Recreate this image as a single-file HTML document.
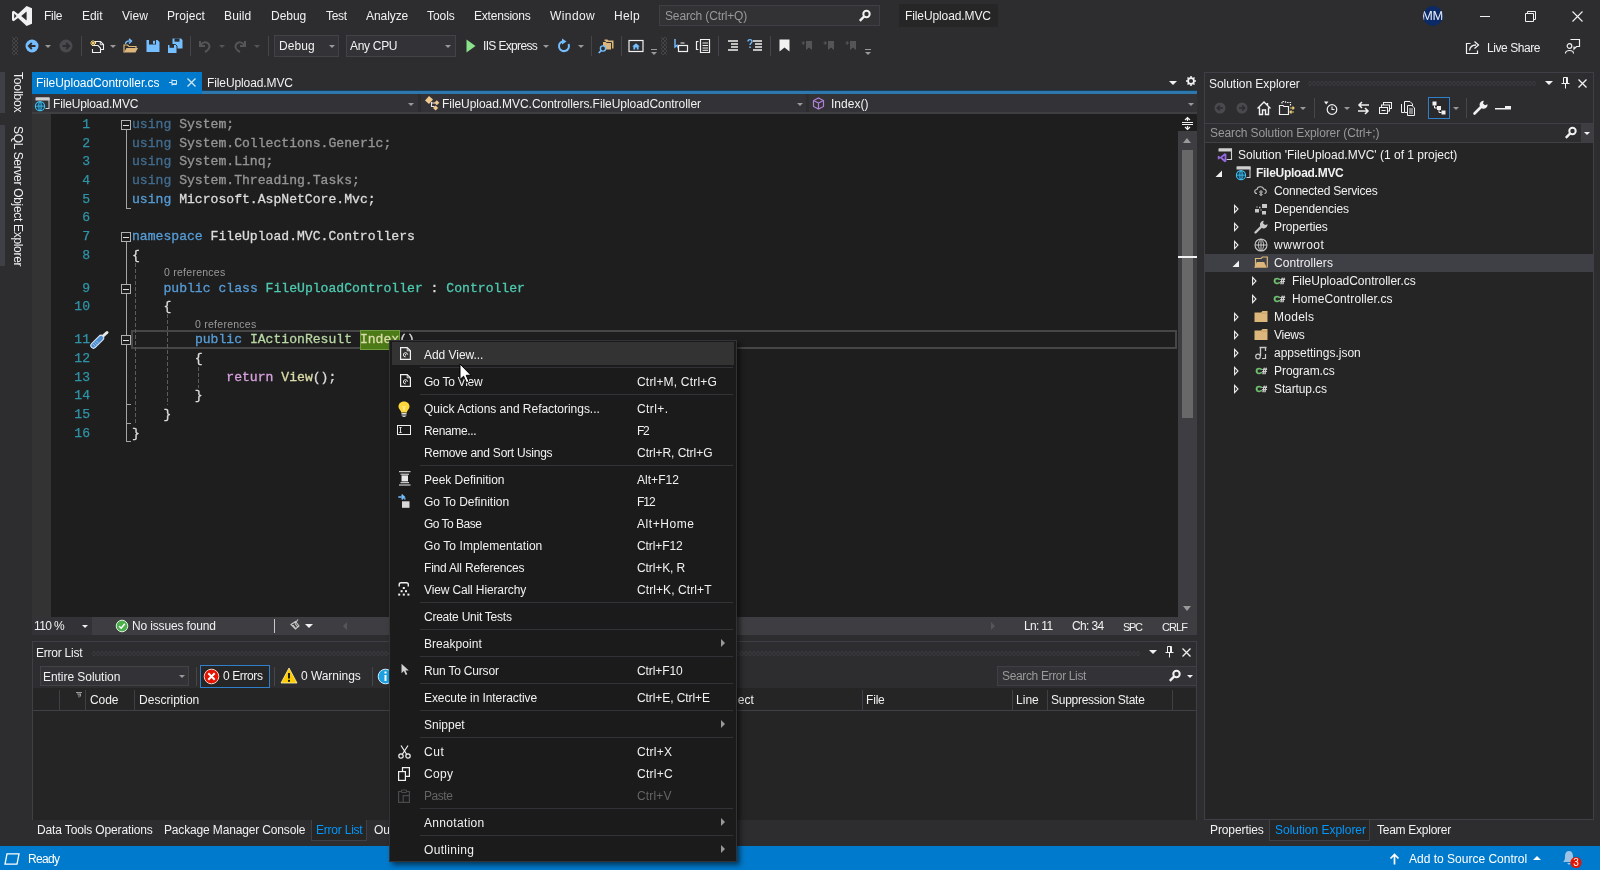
<!DOCTYPE html>
<html lang="en">
<head>
<meta charset="utf-8">
<title>FileUpload.MVC - Microsoft Visual Studio</title>
<style>
*{box-sizing:border-box;margin:0;padding:0}
html,body{width:1600px;height:870px;overflow:hidden;background:#2d2d30}
body{position:relative;font-family:"Liberation Sans",sans-serif;font-size:12px;color:#f1f1f1;line-height:16px;-webkit-font-smoothing:antialiased}
.a{position:absolute}
.t{position:absolute;white-space:nowrap;line-height:16px;height:16px}
.b{position:absolute}
svg{position:absolute;overflow:visible}
.code{-webkit-text-stroke:0.3px;margin:1px 0 0 1px;font-family:"Liberation Mono",monospace;font-size:13.1px;color:#dcdcdc;white-space:pre;position:absolute;line-height:19px;height:19px}
.kw{color:#569cd6}.ty{color:#4ec9b0}.fn{color:#dcdcaa}.cf{color:#d8a0df}
.ln{-webkit-text-stroke:0.25px;margin-top:1px;font-family:"Liberation Mono",monospace;font-size:13.1px;color:#2f94a8;position:absolute;text-align:right;width:40px;line-height:19px;height:19px}
.cl{font-size:10.5px;color:#999;position:absolute;white-space:nowrap;line-height:13px}
.dim{color:#999}
.mi{position:absolute;left:35px;white-space:nowrap;line-height:16px;color:#f1f1f1}
.mk{position:absolute;left:248px;white-space:nowrap;line-height:16px;color:#f1f1f1}
.ms{position:absolute;left:32px;width:312px;height:1px;background:#333337}
.sub{position:absolute;left:333px;width:0;height:0;border-left:4px solid #999;border-top:4px solid transparent;border-bottom:4px solid transparent}
.tri{position:absolute;width:0;height:0;border-left:3px solid transparent;border-right:3px solid transparent;border-top:3px solid #999}
.sep{position:absolute;width:1px;background:#46464a}
.dots{position:absolute;height:5px;background-image:radial-gradient(circle,#48484c 0.55px,transparent 0.85px),radial-gradient(circle,#48484c 0.55px,transparent 0.85px);background-size:4px 4px,4px 4px;background-position:0 -1.5px,2px 0.5px}
.ity{color:#b8d7a3}.hl{background:#4b7a17;display:inline-block;height:20px;line-height:19px;vertical-align:top;box-shadow:inset 0 0 0 1px #6f9c3c;padding:0 0.4px;margin:0 -0.4px}
.grip{background-image:radial-gradient(circle,#5e5e62 0.55px,transparent 0.85px),radial-gradient(circle,#5e5e62 0.55px,transparent 0.85px);background-size:4px 4px,4px 4px;background-position:0 0,2px 2px}
</style>
</head>
<body>
<div id="root" style="position:absolute;left:0;top:0;width:1600px;height:870px;will-change:transform">
<!-- ===== Title / menu bar ===== -->
<div class="a" id="titlebar" style="left:0;top:0;width:1600px;height:31px;background:#2d2d30"></div>
<svg style="left:11px;top:5px" width="22" height="22" viewBox="0 0 22 22"><path d="M15.6 1 L21 3.2 V18.8 L15.6 21 L7 12.9 L2.7 16.2 L1 15.3 V6.7 L2.7 5.8 L7 9.1 Z M15.6 6.6 L10.2 11 L15.6 15.4 Z M3.2 8.6 V13.4 L5.6 11 Z" fill="#f1f1f1" fill-rule="evenodd"/></svg>
<div class="t" style="letter-spacing:-0.281px;left:44px;top:8px">File</div>
<div class="t" style="letter-spacing:-0.062px;left:82px;top:8px">Edit</div>
<div class="t" style="letter-spacing:0.068px;left:122px;top:8px">View</div>
<div class="t" style="letter-spacing:0.073px;left:167px;top:8px">Project</div>
<div class="t" style="letter-spacing:0.153px;left:224px;top:8px">Build</div>
<div class="t" style="letter-spacing:-0.019px;left:271px;top:8px">Debug</div>
<div class="t" style="letter-spacing:-0.339px;left:326px;top:8px">Test</div>
<div class="t" style="letter-spacing:-0.067px;left:366px;top:8px">Analyze</div>
<div class="t" style="letter-spacing:-0.054px;left:427px;top:8px">Tools</div>
<div class="t" style="letter-spacing:-0.211px;left:474px;top:8px">Extensions</div>
<div class="t" style="letter-spacing:0.422px;left:550px;top:8px">Window</div>
<div class="t" style="letter-spacing:0.304px;left:614px;top:8px">Help</div>
<div class="a" style="left:659px;top:5px;width:221px;height:21px;background:#323235;border:1px solid #3f3f46"></div>
<div class="t" style="letter-spacing:-0.147px;left:665px;top:8px;color:#999">Search (Ctrl+Q)</div>
<svg style="left:858px;top:9px" width="14" height="14" viewBox="0 0 14 14"><circle cx="8.5" cy="5" r="3.2" fill="none" stroke="#f1f1f1" stroke-width="2"/><path d="M6.2 7.4 L1.8 11.8" stroke="#f1f1f1" stroke-width="2.4"/></svg>
<div class="a" style="left:899px;top:4px;width:99px;height:23px;background:#262627"></div>
<div class="t" style="letter-spacing:-0.106px;left:905px;top:8px">FileUpload.MVC</div>
<div class="a" style="left:1423px;top:6px;width:20px;height:20px;border-radius:10px;background:#0b2a66;overflow:hidden"><div class="t" style="left:-1px;top:2px;font-size:13px;color:#e8eefc;letter-spacing:-0.3px">MM</div></div>
<div class="a" style="left:1480px;top:16px;width:10px;height:1px;background:#f1f1f1"></div>
<svg style="left:1525px;top:11px" width="11" height="11" viewBox="0 0 11 11"><path d="M0.5 2.5 H8.5 V10.5 H0.5 Z M2.5 2.5 V0.5 H10.5 V8.5 H8.5" fill="none" stroke="#f1f1f1" stroke-width="1"/></svg>
<svg style="left:1572px;top:11px" width="11" height="11" viewBox="0 0 11 11"><path d="M0.5 0.5 L10.5 10.5 M10.5 0.5 L0.5 10.5" fill="none" stroke="#f1f1f1" stroke-width="1.1"/></svg>

<!-- ===== Toolbar ===== -->
<div class="a grip" style="left:12px;top:37px;width:6px;height:18px"></div>
<!-- back -->
<svg style="left:24px;top:38px" width="16" height="16" viewBox="0 0 16 16"><circle cx="8" cy="8" r="6.5" fill="#75beff"/><path d="M11.5 8 H5.2 M7.8 5 L4.8 8 L7.8 11" stroke="#2d2d30" stroke-width="1.8" fill="none"/></svg>
<div class="tri" style="left:45px;top:45px"></div>
<svg style="left:58px;top:38px" width="16" height="16" viewBox="0 0 16 16"><circle cx="8" cy="8" r="6.5" fill="#4a4a4e"/><path d="M4.5 8 H10.8 M8.2 5 L11.2 8 L8.2 11" stroke="#2d2d30" stroke-width="1.8" fill="none"/></svg>
<div class="sep" style="left:81px;top:36px;height:20px"></div>
<!-- new item -->
<svg style="left:88px;top:38px" width="16" height="16" viewBox="0 0 16 16"><path d="M7.5 6 V3.5 H12.5 L15.5 6.5 V11.5 H13" fill="none" stroke="#f1f1f1" stroke-width="1.1"/><path d="M12.3 3.5 V6.7 H15.5" fill="none" stroke="#f1f1f1" stroke-width="0.9"/><path d="M4.5 8 V7.5 H10 L12.5 10 V14.5 H4.5 V11" fill="none" stroke="#f1f1f1" stroke-width="1.1"/><path d="M5 2 V8 M2 5 H8 M3 3 L7 7 M7 3 L3 7" stroke="#f0d070" stroke-width="1"/></svg>
<div class="tri" style="left:110px;top:45px"></div>
<!-- open -->
<svg style="left:122px;top:38px" width="17" height="16" viewBox="0 0 17 16"><path d="M2 14.5 V7 H5.5 L7 8.5 H14 V10" fill="none" stroke="#dcb67a" stroke-width="1.2"/><path d="M2 14.5 L4.5 10 H16 L13.5 14.5 Z" fill="#dcb67a"/><path d="M3.5 6 C3.5 3.5 6 2.5 9 3 M7 0.8 L9.5 3 L7 5.4" fill="none" stroke="#75beff" stroke-width="1.4"/></svg>
<!-- save -->
<svg style="left:145px;top:38px" width="16" height="16" viewBox="0 0 16 16"><path d="M1.5 2 H12.5 L14.5 4 V14 H1.5 Z" fill="#75beff"/><rect x="4" y="2" width="7" height="4.5" fill="#2d2d30"/><rect x="8" y="2.8" width="2" height="3" fill="#75beff"/><rect x="4" y="9.5" width="8" height="4.5" fill="#75beff"/></svg>
<!-- save all -->
<svg style="left:166px;top:37px" width="18" height="18" viewBox="0 0 18 18"><path d="M6.5 1.5 H15 L16.5 3 V11.5 H6.5 Z" fill="#75beff"/><rect x="8.5" y="1.5" width="5" height="3.2" fill="#2d2d30"/><path d="M1.5 7.5 H9.5 L11 9 V16.5 H1.5 Z" fill="#75beff" stroke="#2d2d30" stroke-width="1"/><rect x="3.5" y="7.8" width="4.5" height="3" fill="#2d2d30"/></svg>
<div class="sep" style="left:190px;top:36px;height:20px"></div>
<!-- undo (disabled) -->
<svg style="left:197px;top:38px" width="16" height="16" viewBox="0 0 16 16"><path d="M3 3 V8 H8 M3.5 7.5 C5 4 10 3 12 6.5 C13.5 9.5 11 12.5 8 14" fill="none" stroke="#555558" stroke-width="2"/></svg>
<div class="tri" style="left:219px;top:45px;border-top-color:#555558"></div>
<svg style="left:232px;top:38px" width="16" height="16" viewBox="0 0 16 16"><path d="M13 3 V8 H8 M12.5 7.5 C11 4 6 3 4 6.5 C2.5 9.5 5 12.5 8 14" fill="none" stroke="#555558" stroke-width="2"/></svg>
<div class="tri" style="left:254px;top:45px;border-top-color:#555558"></div>
<div class="sep" style="left:268px;top:36px;height:20px"></div>
<!-- combos -->
<div class="a" style="left:274px;top:35px;width:65px;height:22px;background:#333337;border:1px solid #434346"></div>
<div class="t" style="letter-spacing:0.106px;left:279px;top:38px">Debug</div>
<div class="tri" style="left:329px;top:45px"></div>
<div class="a" style="left:346px;top:35px;width:110px;height:22px;background:#333337;border:1px solid #434346"></div>
<div class="t" style="letter-spacing:-0.31px;left:350px;top:38px">Any CPU</div>
<div class="tri" style="left:445px;top:45px"></div>
<!-- play -->
<svg style="left:466px;top:39px" width="10" height="14" viewBox="0 0 10 14"><path d="M0.5 0.5 L9.5 7 L0.5 13.5 Z" fill="#8ae28a"/></svg>
<div class="t" style="letter-spacing:-0.656px;left:483px;top:38px">IIS Express</div>
<div class="tri" style="left:543px;top:45px"></div>
<!-- refresh -->
<svg style="left:556px;top:38px" width="16" height="16" viewBox="0 0 16 16"><path d="M12.5 6 A5 5 0 1 1 7 3.2" fill="none" stroke="#75beff" stroke-width="2"/><path d="M6 0.5 L10.5 3.5 L6 6.5 Z" fill="#75beff"/></svg>
<div class="tri" style="left:578px;top:45px"></div>
<div class="sep" style="left:591px;top:36px;height:20px"></div>
<!-- find in files -->
<svg style="left:598px;top:38px" width="17" height="16" viewBox="0 0 17 16"><path d="M6.5 1.5 H9.5 L10.5 2.5 H15.5 V10.5 H6.5 Z" fill="#dcb67a"/><path d="M4.5 3.5 H7.5 L8.5 4.5 H13.5 V12 H4.5 Z" fill="#dcb67a" stroke="#2d2d30" stroke-width="1"/><circle cx="5" cy="10.5" r="2.6" fill="#2d2d30" stroke="#75beff" stroke-width="1.4"/><path d="M3.2 12.5 L0.8 15" stroke="#75beff" stroke-width="1.8"/></svg>
<div class="sep" style="left:621px;top:36px;height:20px"></div>
<!-- browser home -->
<svg style="left:628px;top:38px" width="16" height="16" viewBox="0 0 16 16"><rect x="1" y="2.5" width="14" height="11" fill="none" stroke="#f1f1f1" stroke-width="1.2"/><path d="M8 5.2 L4.2 8.5 H5.4 V11.5 H7.2 V9.5 H8.8 V11.5 H10.6 V8.5 H11.8 Z" fill="#75beff"/></svg>
<div class="a" style="left:651px;top:49px;width:6px;height:1px;background:#999"></div>
<div class="tri" style="left:651px;top:52px"></div>
<div class="a grip" style="left:661px;top:37px;width:6px;height:18px"></div>
<!-- misc editing icons -->
<svg style="left:673px;top:38px" width="16" height="16" viewBox="0 0 16 16"><path d="M2 1 V9 L4 7.3 L5.5 10.5" fill="none" stroke="#75beff" stroke-width="1.4"/><rect x="5.5" y="7.5" width="9" height="6" fill="none" stroke="#f1f1f1" stroke-width="1.2"/><path d="M7.5 5 H11.5" stroke="#f1f1f1"/></svg>
<svg style="left:695px;top:38px" width="16" height="16" viewBox="0 0 16 16"><path d="M3.5 3.5 H1.5 V11.5 H3.5" fill="none" stroke="#f1f1f1" stroke-width="1.2"/><path d="M5.5 1.5 H14.5 V14.5 H5.5 Z" fill="none" stroke="#f1f1f1" stroke-width="1.2"/><path d="M7.5 5 H13 M7.5 7.5 H13 M7.5 10 H13 M7.5 12.3 H13" stroke="#f1f1f1" stroke-width="1"/></svg>
<div class="sep" style="left:718px;top:36px;height:20px"></div>
<svg style="left:726px;top:39px" width="14" height="14" viewBox="0 0 14 14"><path d="M2 2 H12 M5 5 H12 M5 8 H12 M2 11 H12" stroke="#f1f1f1" stroke-width="1.3"/></svg>
<svg style="left:747px;top:38px" width="16" height="16" viewBox="0 0 16 16"><path d="M6 3 H15 M8 6 H15 M8 9 H15 M6 12 H15" stroke="#f1f1f1" stroke-width="1.3"/><path d="M1 3.5 C1 1 5 1 5 3.5 C5 5 3 5 3 7" fill="none" stroke="#75beff" stroke-width="1.4"/><rect x="2.3" y="8.5" width="1.5" height="1.5" fill="#75beff"/></svg>
<div class="sep" style="left:770px;top:36px;height:20px"></div>
<svg style="left:779px;top:39px" width="11" height="13" viewBox="0 0 11 13"><path d="M0.5 0.5 H10.5 V12.5 L5.5 8.5 L0.5 12.5 Z" fill="#f1f1f1"/></svg>
<svg style="left:801px;top:40px" width="12" height="12" viewBox="0 0 12 12"><path d="M5 1 H11 V10 L8 7.5 L5 10 Z" fill="#555558"/><path d="M0.5 3 H4 M2.2 1.3 V4.7" stroke="#555558" stroke-width="1.2"/></svg>
<svg style="left:823px;top:40px" width="12" height="12" viewBox="0 0 12 12"><path d="M5 1 H11 V10 L8 7.5 L5 10 Z" fill="#555558"/><path d="M0.5 3 H4 M2.2 1.3 V4.7" stroke="#555558" stroke-width="1.2"/></svg>
<svg style="left:845px;top:40px" width="12" height="12" viewBox="0 0 12 12"><path d="M5 1 H11 V10 L8 7.5 L5 10 Z" fill="#555558"/><path d="M0.5 3 H4 M2.2 1.3 V4.7" stroke="#555558" stroke-width="1.2"/></svg>
<div class="a" style="left:865px;top:49px;width:6px;height:1px;background:#999"></div>
<div class="tri" style="left:865px;top:52px"></div>
<!-- live share -->
<svg style="left:1465px;top:40px" width="16" height="15" viewBox="0 0 16 15"><path d="M5.5 3.5 H1.5 V13.5 H12.5 V10.5" fill="none" stroke="#f1f1f1" stroke-width="1.2"/><path d="M4.5 10.5 C5 7 7.5 5 11 5 M9.5 1.5 L13.5 5 L9.5 8.5" fill="none" stroke="#f1f1f1" stroke-width="1.3"/></svg>
<div class="t" style="letter-spacing:-0.431px;left:1487px;top:40px">Live Share</div>
<svg style="left:1564px;top:38px" width="17" height="17" viewBox="0 0 17 17"><path d="M6.5 1.5 H15.5 V8.5 H12.5 L10 11 V8.5" fill="none" stroke="#f1f1f1" stroke-width="1.2"/><circle cx="5.5" cy="8" r="2.3" fill="none" stroke="#f1f1f1" stroke-width="1.2"/><path d="M1.5 15.5 C1.5 11.5 9.5 11.5 9.5 15.5" fill="none" stroke="#f1f1f1" stroke-width="1.2"/></svg>

<!-- ===== Left auto-hide strip ===== -->
<div class="a" style="left:0;top:72px;width:5px;height:41px;background:#3f3f46"></div>
<div class="a" style="left:0;top:125px;width:5px;height:141px;background:#3f3f46"></div>
<div class="t" style="left:10px;top:72px;letter-spacing:-0.15px;transform-origin:0 0;transform:rotate(90deg) translate(0,-100%);">Toolbox</div>
<div class="t" style="left:10px;top:126px;letter-spacing:-0.31px;transform-origin:0 0;transform:rotate(90deg) translate(0,-100%);">SQL Server Object Explorer</div>
<!-- ===== Document well ===== -->
<div class="a" style="left:32px;top:72px;width:170px;height:19px;background:#007acc"></div>
<div class="t" id="tab1" style="letter-spacing:-0.026px;left:36px;top:75px;color:#fff">FileUploadController.cs</div>
<svg style="left:169px;top:78px" width="9" height="9" viewBox="0 0 9 9"><path d="M0 4.5 H3 M3 1.5 V7.5 M3 2.5 H7.5 V6.5 H3 M3 5.8 H7.5" fill="none" stroke="#d0e6f5" stroke-width="1"/></svg>
<svg style="left:187px;top:78px" width="9" height="9" viewBox="0 0 9 9"><path d="M0.5 0.5 L8.5 8.5 M8.5 0.5 L0.5 8.5" fill="none" stroke="#d0e6f5" stroke-width="1.3"/></svg>
<div class="t" id="tab2" style="letter-spacing:-0.106px;left:207px;top:75px">FileUpload.MVC</div>
<div class="a" style="left:202px;top:90px;width:995px;height:1px;background:#173f5a"></div><div class="a" style="left:202px;top:91px;width:995px;height:3px;background:#2f78ad"></div><div class="a" style="left:32px;top:90px;width:170px;height:4px;background:#007acc"></div>
<div class="tri" style="left:1169px;top:81px;border-left-width:4px;border-right-width:4px;border-top:4px solid #f1f1f1"></div>
<svg style="left:1186px;top:76px" width="10" height="10" viewBox="0 0 10 10"><path d="M5 0 V10 M0 5 H10 M1.5 1.5 L8.5 8.5 M8.5 1.5 L1.5 8.5" stroke="#f1f1f1" stroke-width="1.5"/><circle cx="5" cy="5" r="2.9" fill="#2d2d30" stroke="#f1f1f1" stroke-width="1.7"/></svg>
<div class="a" style="left:32px;top:94px;width:1165px;height:20px;background:#333337"></div><div class="a" style="left:32px;top:112px;width:1165px;height:2px;background:#3f3f42"></div>
<div class="a" style="left:418px;top:94px;width:3px;height:18px;background:#2d2d30"></div>
<div class="a" style="left:806px;top:94px;width:3px;height:18px;background:#2d2d30"></div>
<svg style="left:35px;top:96px" width="16" height="16" viewBox="0 0 16 16"><path d="M1 2 H14 V12.5 H10.5" fill="none" stroke="#d0d0d0" stroke-width="1.1"/><path d="M0.5 1.5 H14.5 V4.5 H0.5 Z" fill="#d0d0d0"/><circle cx="5" cy="10.2" r="4.6" fill="#10384f" stroke="#45c2f2" stroke-width="1.1"/><path d="M0.6 10.2 H9.4 M5 5.6 V14.8 M5 5.6 C2.6 7.6 2.6 12.8 5 14.8 M5 5.6 C7.4 7.6 7.4 12.8 5 14.8" fill="none" stroke="#45c2f2" stroke-width="0.8"/></svg>
<div class="t" style="letter-spacing:-0.144px;left:53px;top:96px">FileUpload.MVC</div>
<div class="tri" style="left:408px;top:103px"></div>
<svg style="left:424px;top:95px" width="16" height="17" viewBox="0 0 16 17"><path d="M1 5.5 L5 1 L9 4.5 L5 9 Z" fill="#efc88c"/><path d="M7.5 7 V11.5 H10.5 M7.5 8 H11" fill="none" stroke="#e8e8e8" stroke-width="1.1"/><path d="M10.3 7.8 L12.8 5.3 L15.3 7.8 L12.8 10.3 Z" fill="#efc88c"/><path d="M9 13 L11.6 10.4 L14.2 13 L11.6 15.6 Z" fill="#efc88c"/></svg>
<div class="t" style="letter-spacing:-0.053px;left:442px;top:96px">FileUpload.MVC.Controllers.FileUploadController</div>
<div class="tri" style="left:797px;top:103px"></div>
<svg style="left:812px;top:97px" width="13" height="13" viewBox="0 0 13 13"><path d="M6.5 1 L11.5 3.5 V9.5 L6.5 12 L1.5 9.5 V3.5 Z M1.5 3.5 L6.5 6 L11.5 3.5 M6.5 6 V12" fill="none" stroke="#b180d7" stroke-width="1.2"/></svg>
<div class="t" style="letter-spacing:0.023px;left:831px;top:96px">Index()</div>
<div class="tri" style="left:1188px;top:103px"></div>
<div class="a" style="left:32px;top:114px;width:1165px;height:503px;background:#1e1e1e"></div>
<div class="a" style="left:32px;top:114px;width:19px;height:503px;background:#333333"></div>
<div class="a" style="left:131px;top:330px;width:1046px;height:19px;border:2px solid #464646"></div>
<div class="a" style="left:126px;top:128px;width:1px;height:80px;background:#a5a5a5"></div>
<div class="a" style="left:126px;top:208px;width:5px;height:1px;background:#a5a5a5"></div>
<div class="a" style="left:126px;top:241px;width:1px;height:201px;background:#a5a5a5"></div>
<div class="a" style="left:126px;top:404px;width:5px;height:1px;background:#a5a5a5"></div>
<div class="a" style="left:126px;top:423px;width:5px;height:1px;background:#a5a5a5"></div>
<div class="a" style="left:126px;top:441px;width:5px;height:1px;background:#a5a5a5"></div>
<div class="a" style="left:121px;top:120px;width:10px;height:10px;border:1px solid #b0b0b0;background:#1e1e1e"></div><div class="a" style="left:123px;top:125px;width:6px;height:1px;background:#e0e0e0"></div>
<div class="a" style="left:121px;top:232px;width:10px;height:10px;border:1px solid #b0b0b0;background:#1e1e1e"></div><div class="a" style="left:123px;top:237px;width:6px;height:1px;background:#e0e0e0"></div>
<div class="a" style="left:121px;top:284px;width:10px;height:10px;border:1px solid #b0b0b0;background:#1e1e1e"></div><div class="a" style="left:123px;top:289px;width:6px;height:1px;background:#e0e0e0"></div>
<div class="a" style="left:121px;top:335px;width:10px;height:10px;border:1px solid #b0b0b0;background:#1e1e1e"></div><div class="a" style="left:123px;top:340px;width:6px;height:1px;background:#e0e0e0"></div>
<div class="a" style="left:135px;top:263px;width:1px;height:162px;background-image:linear-gradient(#5c5c5c 66%,transparent 66%);background-size:1px 6px"></div>
<div class="a" style="left:167px;top:314px;width:1px;height:91px;background-image:linear-gradient(#5c5c5c 66%,transparent 66%);background-size:1px 6px"></div>
<div class="a" style="left:198px;top:367px;width:1px;height:21px;background-image:linear-gradient(#5c5c5c 66%,transparent 66%);background-size:1px 6px"></div>
<div class="ln" style="left:50px;top:114px">1</div>
<div class="code" style="opacity:0.62;left:131px;top:114px"><span class="kw">using</span> System;</div>
<div class="ln" style="left:50px;top:133px">2</div>
<div class="code" style="opacity:0.62;left:131px;top:133px"><span class="kw">using</span> System.Collections.Generic;</div>
<div class="ln" style="left:50px;top:151px">3</div>
<div class="code" style="opacity:0.62;left:131px;top:151px"><span class="kw">using</span> System.Linq;</div>
<div class="ln" style="left:50px;top:170px">4</div>
<div class="code" style="opacity:0.62;left:131px;top:170px"><span class="kw">using</span> System.Threading.Tasks;</div>
<div class="ln" style="left:50px;top:189px">5</div>
<div class="code" style="left:131px;top:189px"><span class="kw">using</span> Microsoft.AspNetCore.Mvc;</div>
<div class="ln" style="left:50px;top:207px">6</div>
<div class="ln" style="left:50px;top:226px">7</div>
<div class="code" style="left:131px;top:226px"><span class="kw">namespace</span> FileUpload.MVC.Controllers</div>
<div class="ln" style="left:50px;top:245px">8</div>
<div class="code" style="left:131px;top:245px">{</div>
<div class="ln" style="left:50px;top:278px">9</div>
<div class="code" style="left:131px;top:278px">    <span class="kw">public</span> <span class="kw">class</span> <span class="ty">FileUploadController</span> : <span class="ty">Controller</span></div>
<div class="ln" style="left:50px;top:296px">10</div>
<div class="code" style="left:131px;top:296px">    {</div>
<div class="ln" style="left:50px;top:329px">11</div>
<div class="code" style="left:131px;top:329px">        <span class="kw">public</span> <span class="ity">IActionResult</span> <span class="fn hl">Index</span>()</div>
<div class="ln" style="left:50px;top:348px">12</div>
<div class="code" style="left:131px;top:348px">        {</div>
<div class="ln" style="left:50px;top:367px">13</div>
<div class="code" style="left:131px;top:367px">            <span class="cf">return</span> <span class="fn">View</span>();</div>
<div class="ln" style="left:50px;top:385px">14</div>
<div class="code" style="left:131px;top:385px">        }</div>
<div class="ln" style="left:50px;top:404px">15</div>
<div class="code" style="left:131px;top:404px">    }</div>
<div class="ln" style="left:50px;top:423px">16</div>
<div class="code" style="left:131px;top:423px">}</div>
<div class="cl" style="letter-spacing:0.257px;left:164px;top:266px">0 references</div>
<div class="cl" style="letter-spacing:0.257px;left:195px;top:318px">0 references</div>
<svg style="left:90px;top:331px" width="19" height="18" viewBox="0 0 19 18"><path d="M12 6 L17 1.5" stroke="#e8e8e8" stroke-width="3" stroke-linecap="round"/><path d="M3.5 14.5 L11 7" stroke="#dfeaf6" stroke-width="6.4" stroke-linecap="round"/><path d="M3.5 14.5 L11 7" stroke="#4f8fd0" stroke-width="4.4" stroke-linecap="round"/><path d="M3 13 L6 16 M4.6 11.4 L7.6 14.4 M6.2 9.8 L9.2 12.8" stroke="#9cc4ee" stroke-width="0.9"/></svg>
<!-- ===== Editor scrollbar ===== -->
<div class="a" style="left:1178px;top:114px;width:19px;height:503px;background:#3e3e42"></div>
<div class="a" style="left:1178px;top:114px;width:19px;height:17px;background:#1e1e1e"></div>
<svg style="left:1182px;top:117px" width="11" height="13" viewBox="0 0 11 13"><path d="M0 5.5 H11 M0 7.5 H11 M5.5 0.5 V4 M5.5 9 V12.5 M3 3 L5.5 0.5 L8 3 M3 10 L5.5 12.5 L8 10" fill="none" stroke="#f1f1f1" stroke-width="1.2"/></svg>
<div class="a" style="left:1183px;top:138px;width:0;height:0;border-left:4.5px solid transparent;border-right:4.5px solid transparent;border-bottom:5px solid #999"></div>
<div class="a" style="left:1182px;top:150px;width:11px;height:268px;background:#686868"></div>
<div class="a" style="left:1178px;top:256px;width:19px;height:2px;background:#f1f1f1"></div>
<div class="a" style="left:1183px;top:606px;width:0;height:0;border-left:4.5px solid transparent;border-right:4.5px solid transparent;border-top:5px solid #999"></div>
<!-- ===== Editor bottom bar ===== -->
<div class="a" style="left:32px;top:617px;width:1165px;height:18px;background:#3e3e42"></div>
<div class="a" style="left:32px;top:617px;width:60px;height:18px;background:#333337"></div>
<div class="t" style="letter-spacing:-0.585px;left:34px;top:618px">110 %</div>
<div class="tri" style="left:82px;top:625px;border-top-color:#f1f1f1"></div>
<svg style="left:115px;top:619px" width="14" height="14" viewBox="0 0 14 14"><circle cx="7" cy="7" r="5.8" fill="#4cae4c" stroke="#d9f0d9" stroke-width="1"/><path d="M4.2 7.2 L6.2 9.2 L9.8 4.8" fill="none" stroke="#fff" stroke-width="1.5"/></svg>
<div class="t" style="letter-spacing:-0.147px;left:132px;top:618px">No issues found</div>
<div class="a" style="left:274px;top:619px;width:1px;height:14px;background:#c8c8c8"></div>
<svg style="left:289px;top:619px" width="13" height="13" viewBox="0 0 13 13"><path d="M9 0.5 L6 4.5 M2 5.5 L6.5 2.5 L10 7 L6.5 10 Z M4 6 L7 10 M6 4.5 L9 8.5" fill="none" stroke="#c8c8c8" stroke-width="1.1"/></svg>
<div class="tri" style="left:305px;top:624px;border-left-width:4px;border-right-width:4px;border-top:4px solid #f1f1f1"></div>
<div class="a" style="left:343px;top:622px;width:0;height:0;border-top:4px solid transparent;border-bottom:4px solid transparent;border-right:4px solid #55555a"></div>
<div class="a" style="left:991px;top:622px;width:0;height:0;border-top:4px solid transparent;border-bottom:4px solid transparent;border-left:4px solid #55555a"></div>
<div class="t" style="letter-spacing:-0.677px;left:1024px;top:618px">Ln: 11</div>
<div class="t" style="letter-spacing:-0.612px;left:1072px;top:618px">Ch: 34</div>
<div class="t" style="letter-spacing:-1.362px;left:1123px;top:619px;font-size:11px">SPC</div>
<div class="t" style="letter-spacing:-0.911px;left:1162px;top:619px;font-size:11px">CRLF</div>
<!-- ===== Error List ===== -->
<div class="a" style="left:32px;top:641px;width:1165px;height:179px;background:#2d2d30;border:1px solid #3f3f46"></div>
<div class="t" style="letter-spacing:-0.232px;left:36px;top:645px">Error List</div>
<div class="dots" style="left:92px;top:651px;width:1048px"></div>
<div class="tri" style="left:1149px;top:650px;border-left-width:4px;border-right-width:4px;border-top:4px solid #f1f1f1"></div>
<svg style="left:1164px;top:646px" width="10" height="12" viewBox="0 0 10 12"><path d="M3.5 0.5 H7.5 V6.5 H3.5 Z M6.5 0.5 V6.5 M1.5 6.5 H9.5 M5.5 6.5 V11.5" fill="none" stroke="#f1f1f1" stroke-width="1"/></svg>
<svg style="left:1182px;top:648px" width="9" height="9" viewBox="0 0 9 9"><path d="M0.5 0.5 L8.5 8.5 M8.5 0.5 L0.5 8.5" fill="none" stroke="#f1f1f1" stroke-width="1.3"/></svg>
<div class="a" style="left:40px;top:666px;width:149px;height:20px;background:#333337;border:1px solid #434346"></div>
<div class="t" style="letter-spacing:-0.053px;left:43px;top:669px">Entire Solution</div>
<div class="tri" style="left:179px;top:675px"></div>
<div class="sep" style="left:196px;top:667px;height:19px"></div>
<div class="a" style="left:200px;top:665px;width:70px;height:23px;background:#262627;border:1px solid #2f7fcb"></div>
<svg style="left:203px;top:668px" width="17" height="17" viewBox="0 0 17 17"><circle cx="8.5" cy="8.5" r="7.3" fill="#e51400" stroke="#f6d4d0" stroke-width="1"/><path d="M5.3 5.3 L11.7 11.7 M11.7 5.3 L5.3 11.7" stroke="#fff" stroke-width="2"/></svg>
<div class="t" style="letter-spacing:-0.384px;left:223px;top:668px">0 Errors</div>
<div class="sep" style="left:274px;top:667px;height:19px"></div>
<svg style="left:280px;top:667px" width="18" height="17" viewBox="0 0 18 17"><path d="M9 1 L17 16 H1 Z" fill="#ffcc00" stroke="#fff3b0" stroke-width="0.8"/><path d="M9 6 V11.5" stroke="#1e1e1e" stroke-width="2"/><rect x="8" y="12.8" width="2" height="2" fill="#1e1e1e"/></svg>
<div class="t" style="letter-spacing:-0.05px;left:301px;top:668px">0 Warnings</div>
<div class="sep" style="left:372px;top:667px;height:19px"></div>
<svg style="left:377px;top:668px" width="17" height="17" viewBox="0 0 17 17"><circle cx="8.5" cy="8.5" r="7.3" fill="#1ba1e2" stroke="#d6eefb" stroke-width="1"/><path d="M8.5 7 V13" stroke="#fff" stroke-width="2"/><rect x="7.5" y="3.5" width="2" height="2" fill="#fff"/></svg>
<div class="a" style="left:997px;top:666px;width:200px;height:20px;background:#333337;border:1px solid #3f3f46"></div>
<div class="t" style="letter-spacing:-0.352px;left:1002px;top:668px;color:#999">Search Error List</div>
<svg style="left:1168px;top:669px" width="14" height="14" viewBox="0 0 14 14"><circle cx="8.5" cy="5" r="3.2" fill="none" stroke="#f1f1f1" stroke-width="2"/><path d="M6.2 7.4 L1.8 11.8" stroke="#f1f1f1" stroke-width="2.4"/></svg>
<div class="tri" style="left:1187px;top:675px;border-top-color:#f1f1f1"></div>
<!-- list -->
<div class="a" style="left:33px;top:688px;width:1163px;height:132px;background:#252526"></div>
<div class="a" style="left:33px;top:710px;width:1163px;height:1px;background:#3f3f46"></div>
<div class="sep" style="left:59px;top:690px;height:20px;background:#3f3f46"></div>
<div class="sep" style="left:85px;top:690px;height:20px;background:#3f3f46"></div>
<div class="sep" style="left:134px;top:690px;height:20px;background:#3f3f46"></div>
<div class="sep" style="left:862px;top:690px;height:20px;background:#3f3f46"></div>
<div class="sep" style="left:1012px;top:690px;height:20px;background:#3f3f46"></div>
<div class="sep" style="left:1047px;top:690px;height:20px;background:#3f3f46"></div>
<div class="sep" style="left:1172px;top:690px;height:20px;background:#3f3f46"></div>
<svg style="left:76px;top:692px" width="6" height="6" viewBox="0 0 6 6"><path d="M0 0.5 H6 M1 2 H5 M3 2 V5.5 M4.5 2 V4.5" stroke="#999" stroke-width="1" fill="none"/></svg>
<div class="t" style="letter-spacing:-0.062px;left:90px;top:692px">Code</div>
<div class="t" style="letter-spacing:0.027px;left:139px;top:692px">Description</div>
<div class="t" style="letter-spacing:0.073px;left:716px;top:692px">Project</div>
<div class="t" style="letter-spacing:-0.181px;left:866px;top:692px">File</div>
<div class="t" style="letter-spacing:0.037px;left:1016px;top:692px">Line</div>
<div class="t" style="letter-spacing:-0.266px;left:1051px;top:692px">Suppression State</div>
<!-- bottom tabs -->
<div class="a" style="left:311px;top:820px;width:56px;height:21px;background:#252526;border:1px solid #3f3f46;border-top:0"></div>
<div class="t" style="letter-spacing:-0.136px;left:37px;top:822px">Data Tools Operations</div>
<div class="t" style="letter-spacing:-0.153px;left:164px;top:822px">Package Manager Console</div>
<div class="t" style="letter-spacing:-0.221px;left:316px;top:822px;color:#0097fb">Error List</div>
<div class="t" style="left:374px;top:822px">Output</div>
<!-- ===== Solution Explorer ===== -->
<div class="a" style="left:1204px;top:72px;width:390px;height:748px;background:#252526;border:1px solid #3f3f46"></div>
<div class="a" style="left:1205px;top:73px;width:388px;height:50px;background:#2d2d30"></div>
<div class="t" style="letter-spacing:-0.037px;left:1209px;top:76px">Solution Explorer</div>
<div class="dots" style="left:1308px;top:81px;width:228px"></div>
<div class="tri" style="left:1545px;top:81px;border-left-width:4px;border-right-width:4px;border-top:4px solid #f1f1f1"></div>
<svg style="left:1560px;top:77px" width="10" height="12" viewBox="0 0 10 12"><path d="M3.5 0.5 H7.5 V6.5 H3.5 Z M6.5 0.5 V6.5 M1.5 6.5 H9.5 M5.5 6.5 V11.5" fill="none" stroke="#f1f1f1" stroke-width="1"/></svg>
<svg style="left:1578px;top:79px" width="9" height="9" viewBox="0 0 9 9"><path d="M0.5 0.5 L8.5 8.5 M8.5 0.5 L0.5 8.5" fill="none" stroke="#f1f1f1" stroke-width="1.3"/></svg>
<svg style="left:1213px;top:101px" width="14" height="14" viewBox="0 0 14 14"><circle cx="7" cy="7" r="5.5" fill="#4a4a4e"/><path d="M10 7 H4.6 M6.8 4.5 L4.3 7 L6.8 9.5" stroke="#2d2d30" stroke-width="1.6" fill="none"/></svg>
<svg style="left:1235px;top:101px" width="14" height="14" viewBox="0 0 14 14"><circle cx="7" cy="7" r="5.5" fill="#4a4a4e"/><path d="M4 7 H9.4 M7.2 4.5 L9.7 7 L7.2 9.5" stroke="#2d2d30" stroke-width="1.6" fill="none"/></svg>
<svg style="left:1256px;top:100px" width="16" height="16" viewBox="0 0 16 16"><path d="M1.5 8.5 L8 2 L14.5 8.5 M3.5 7.5 V14.5 H6.5 V10 H9.5 V14.5 H12.5 V7.5 M11.5 3 V5" fill="none" stroke="#f1f1f1" stroke-width="1.4"/></svg>
<svg style="left:1278px;top:100px" width="17" height="16" viewBox="0 0 17 16"><path d="M1.5 5.5 H5 L6 6.5 H10.5 V14.5 H1.5 Z" fill="none" stroke="#f1f1f1" stroke-width="1.2"/><path d="M4 3.5 V1.5 H7 L8 2.5 H12.5 V6" fill="none" stroke="#f1f1f1" stroke-width="1.2" stroke-dasharray="1.5 1"/><path d="M12 8 H16 M14.5 6.5 L16 8 L14.5 9.5 M16 12 H12 M13.5 10.5 L12 12 L13.5 13.5" fill="none" stroke="#e8c86e" stroke-width="1.2"/></svg>
<div class="tri" style="left:1300px;top:107px"></div>
<div class="sep" style="left:1314px;top:98px;height:20px"></div>
<svg style="left:1323px;top:100px" width="16" height="16" viewBox="0 0 16 16"><circle cx="9" cy="9.5" r="4.8" fill="none" stroke="#f1f1f1" stroke-width="1.2"/><path d="M9 6.5 V9.5 H11.5" fill="none" stroke="#f1f1f1" stroke-width="1.1"/><path d="M1 1.5 H5.5 L3.2 4.5 Z" fill="#f1f1f1"/></svg>
<div class="tri" style="left:1344px;top:107px"></div>
<svg style="left:1356px;top:101px" width="15" height="14" viewBox="0 0 15 14"><path d="M13 4 H3 M6 1 L3 4 L6 7 M2 10 H12 M9 7 L12 10 L9 13" fill="none" stroke="#f1f1f1" stroke-width="1.5"/></svg>
<svg style="left:1379px;top:102px" width="14" height="13" viewBox="0 0 14 13"><rect x="4.5" y="0.5" width="8" height="6" fill="none" stroke="#f1f1f1" stroke-width="1"/><rect x="2.5" y="3" width="8" height="6" fill="#2d2d30" stroke="#f1f1f1" stroke-width="1"/><rect x="0.5" y="5.5" width="8" height="6" fill="#2d2d30" stroke="#f1f1f1" stroke-width="1"/><path d="M2.5 8.5 H6.5" stroke="#f1f1f1" stroke-width="1"/></svg>
<svg style="left:1401px;top:101px" width="15" height="15" viewBox="0 0 15 15"><path d="M0.5 3 V11.5 H3" fill="none" stroke="#f1f1f1" stroke-width="1"/><path d="M3.5 0.5 H9 L11.5 3 V11.5 H3.5 Z" fill="none" stroke="#f1f1f1" stroke-width="1"/><path d="M6.5 4.5 H11 L13.5 7 V14.5 H6.5 Z" fill="#2d2d30" stroke="#f1f1f1" stroke-width="1"/><path d="M8 8 H12 M8 10 H12 M8 12 H12" stroke="#f1f1f1" stroke-width="0.9"/></svg>
<div class="a" style="left:1428px;top:97px;width:22px;height:22px;background:#29292b;border:1px solid #2f7fcb"></div>
<svg style="left:1432px;top:101px" width="14" height="14" viewBox="0 0 14 14"><rect x="0.5" y="0.5" width="4" height="4" fill="#f1f1f1"/><rect x="5" y="5" width="4" height="4" fill="#f1f1f1"/><rect x="9.5" y="9.5" width="4" height="4" fill="#f1f1f1"/><path d="M2.5 4.5 V7 H5 M7 9 V11.5 H9.5" fill="none" stroke="#f1f1f1" stroke-width="1"/></svg>
<div class="tri" style="left:1453px;top:107px"></div>
<div class="sep" style="left:1466px;top:98px;height:20px"></div>
<svg style="left:1472px;top:100px" width="17" height="16" viewBox="0 0 17 16"><path d="M2.5 13.5 L9 7" stroke="#f1f1f1" stroke-width="2.6" stroke-linecap="round"/><path d="M15.5 4.2 A4 4 0 1 1 11.8 0.8 L11 3.5 L13 5.2 Z" fill="#f1f1f1"/></svg>
<svg style="left:1495px;top:103px" width="16" height="9" viewBox="0 0 16 9"><path d="M0 5 H10 V3 H16 V6.5 H0 Z" fill="#f1f1f1"/></svg>
<div class="a" style="left:1205px;top:123px;width:388px;height:20px;background:#2d2d30;border-top:1px solid #3f3f46;border-bottom:1px solid #3f3f46"></div>
<div class="t" style="letter-spacing:-0.112px;left:1210px;top:125px;color:#999">Search Solution Explorer (Ctrl+;)</div>
<svg style="left:1564px;top:126px" width="14" height="14" viewBox="0 0 14 14"><circle cx="8.5" cy="5" r="3.2" fill="none" stroke="#f1f1f1" stroke-width="2"/><path d="M6.2 7.4 L1.8 11.8" stroke="#f1f1f1" stroke-width="2.4"/></svg>
<div class="a" style="left:1581px;top:124px;width:12px;height:18px;background:#3e3e42"></div><div class="tri" style="left:1584px;top:132px;border-top-color:#f1f1f1"></div>
<svg style="left:1216px;top:147px" width="16" height="16" viewBox="0 0 16 16"><path d="M3 2 H15.5 V12.5 H10.5" fill="none" stroke="#d0d0d0" stroke-width="1.1"/><path d="M2.5 1.5 H16 V4.5 H2.5 Z" fill="#d0d0d0"/><path d="M8.6 6.2 L10.4 7 V14.4 L8.6 15.2 L4.2 11.2 L2.6 12.5 L1.8 12.1 V9.1 L2.6 8.7 L4.2 10 Z M8.6 8.8 L6.2 10.6 L8.6 12.4 Z" fill="#9568e0" fill-rule="evenodd"/></svg>
<div class="t" style="left:1238px;top:147px">Solution &#39;FileUpload.MVC&#39; (1 of 1 project)</div>
<svg style="left:1215px;top:170px" width="8" height="8" viewBox="0 0 8 8"><path d="M7 0.5 V7 H0.5 Z" fill="#f1f1f1"/></svg>
<svg style="left:1236px;top:165px" width="16" height="16" viewBox="0 0 16 16"><path d="M1 2 H14 V12.5 H10.5" fill="none" stroke="#d0d0d0" stroke-width="1.1"/><path d="M0.5 1.5 H14.5 V4.5 H0.5 Z" fill="#d0d0d0"/><circle cx="5" cy="10.2" r="4.6" fill="#10384f" stroke="#45c2f2" stroke-width="1.1"/><path d="M0.6 10.2 H9.4 M5 5.6 V14.8 M5 5.6 C2.6 7.6 2.6 12.8 5 14.8 M5 5.6 C7.4 7.6 7.4 12.8 5 14.8" fill="none" stroke="#45c2f2" stroke-width="0.8"/></svg>
<div class="t" style="letter-spacing:-0.273px;left:1256px;top:165px;font-weight:bold">FileUpload.MVC</div>
<svg style="left:1253px;top:183px" width="16" height="16" viewBox="0 0 16 16"><path d="M4 10.5 C1 10.5 1 6.5 4 6.5 C4.5 3 10 3 10.5 6 C14 6 14 10.5 11.5 10.5" fill="none" stroke="#c8c8c8" stroke-width="1.1"/><circle cx="8" cy="9" r="1.2" fill="none" stroke="#c8c8c8"/><path d="M8 10.2 V12.5 M6.5 11 L8 12.7 L9.5 11" fill="none" stroke="#c8c8c8" stroke-width="1"/></svg>
<div class="t" style="letter-spacing:-0.211px;left:1274px;top:183px">Connected Services</div>
<svg style="left:1233px;top:204px" width="7" height="10" viewBox="0 0 7 10"><path d="M1.6 1.4 L5 5 L1.6 8.6 Z" fill="none" stroke="#f1f1f1" stroke-width="1.1"/></svg>
<svg style="left:1253px;top:201px" width="16" height="16" viewBox="0 0 16 16"><rect x="9" y="3" width="5" height="4" fill="#c8c8c8"/><rect x="9" y="10" width="4" height="3.5" fill="#c8c8c8"/><rect x="2" y="8" width="4" height="3.5" fill="#c8c8c8"/><path d="M6 6.5 H7.5 M8 8.5 V9.5 M4 5.5 V6.5" stroke="#c8c8c8" stroke-width="1.4" stroke-dasharray="1.5 1"/></svg>
<div class="t" style="letter-spacing:-0.167px;left:1274px;top:201px">Dependencies</div>
<svg style="left:1233px;top:222px" width="7" height="10" viewBox="0 0 7 10"><path d="M1.6 1.4 L5 5 L1.6 8.6 Z" fill="none" stroke="#f1f1f1" stroke-width="1.1"/></svg>
<svg style="left:1253px;top:219px" width="16" height="16" viewBox="0 0 16 16"><path d="M2.5 13.5 L8 8" stroke="#c8c8c8" stroke-width="2.4" stroke-linecap="round"/><path d="M14.5 5.2 A3.8 3.8 0 1 1 10.8 1.8 L10 4.3 L12 6 Z" fill="#c8c8c8"/></svg>
<div class="t" style="letter-spacing:-0.1px;left:1274px;top:219px">Properties</div>
<svg style="left:1233px;top:240px" width="7" height="10" viewBox="0 0 7 10"><path d="M1.6 1.4 L5 5 L1.6 8.6 Z" fill="none" stroke="#f1f1f1" stroke-width="1.1"/></svg>
<svg style="left:1253px;top:237px" width="16" height="16" viewBox="0 0 16 16"><circle cx="8" cy="8" r="6" fill="none" stroke="#c8c8c8" stroke-width="1.1"/><path d="M2 8 H14 M8 2 V14 M8 2 C4.5 5 4.5 11 8 14 M8 2 C11.5 5 11.5 11 8 14" fill="none" stroke="#c8c8c8" stroke-width="1"/></svg>
<div class="t" style="letter-spacing:0.535px;left:1274px;top:237px">wwwroot</div>
<div class="a" style="left:1205px;top:254px;width:388px;height:18px;background:#3f3f46"></div>
<svg style="left:1232px;top:260px" width="8" height="8" viewBox="0 0 8 8"><path d="M7 0.5 V7 H0.5 Z" fill="#f1f1f1"/></svg>
<svg style="left:1253px;top:255px" width="16" height="16" viewBox="0 0 16 16"><path d="M2.5 12.5 V3.5 H8 L9.5 2 H14.3 V12.5" fill="none" stroke="#dcb67a" stroke-width="1.2"/><path d="M1.2 12.8 L3.8 7 H11.2 L13.8 12.8 Z" fill="#dcb67a"/></svg>
<div class="t" style="letter-spacing:0.087px;left:1274px;top:255px">Controllers</div>
<svg style="left:1251px;top:276px" width="7" height="10" viewBox="0 0 7 10"><path d="M1.6 1.4 L5 5 L1.6 8.6 Z" fill="none" stroke="#f1f1f1" stroke-width="1.1"/></svg>
<svg style="left:1271px;top:273px" width="16" height="16" viewBox="0 0 16 16"><text x="2.6" y="11.4" font-family="Liberation Sans,sans-serif" font-size="9.6" font-weight="bold" fill="#74c774" stroke="#74c774" stroke-width="0.4" letter-spacing="-0.3">C<tspan fill="#e6e6e6" stroke="#e6e6e6" stroke-width="0.35" font-size="8.6" dy="-0.4">#</tspan></text></svg>
<div class="t" style="letter-spacing:-0.016px;left:1292px;top:273px">FileUploadController.cs</div>
<svg style="left:1251px;top:294px" width="7" height="10" viewBox="0 0 7 10"><path d="M1.6 1.4 L5 5 L1.6 8.6 Z" fill="none" stroke="#f1f1f1" stroke-width="1.1"/></svg>
<svg style="left:1271px;top:291px" width="16" height="16" viewBox="0 0 16 16"><text x="2.6" y="11.4" font-family="Liberation Sans,sans-serif" font-size="9.6" font-weight="bold" fill="#74c774" stroke="#74c774" stroke-width="0.4" letter-spacing="-0.3">C<tspan fill="#e6e6e6" stroke="#e6e6e6" stroke-width="0.35" font-size="8.6" dy="-0.4">#</tspan></text></svg>
<div class="t" style="letter-spacing:0.119px;left:1292px;top:291px">HomeController.cs</div>
<svg style="left:1233px;top:312px" width="7" height="10" viewBox="0 0 7 10"><path d="M1.6 1.4 L5 5 L1.6 8.6 Z" fill="none" stroke="#f1f1f1" stroke-width="1.1"/></svg>
<svg style="left:1253px;top:309px" width="16" height="16" viewBox="0 0 16 16"><path d="M1.5 3.5 H8 L9.5 2 H14.5 V13 H1.5 Z" fill="#dcb67a"/><path d="M8.3 4.2 H14" stroke="#b8945a" stroke-width="0.6"/></svg>
<div class="t" style="letter-spacing:0.263px;left:1274px;top:309px">Models</div>
<svg style="left:1233px;top:330px" width="7" height="10" viewBox="0 0 7 10"><path d="M1.6 1.4 L5 5 L1.6 8.6 Z" fill="none" stroke="#f1f1f1" stroke-width="1.1"/></svg>
<svg style="left:1253px;top:327px" width="16" height="16" viewBox="0 0 16 16"><path d="M1.5 3.5 H8 L9.5 2 H14.5 V13 H1.5 Z" fill="#dcb67a"/><path d="M8.3 4.2 H14" stroke="#b8945a" stroke-width="0.6"/></svg>
<div class="t" style="letter-spacing:-0.274px;left:1274px;top:327px">Views</div>
<svg style="left:1233px;top:348px" width="7" height="10" viewBox="0 0 7 10"><path d="M1.6 1.4 L5 5 L1.6 8.6 Z" fill="none" stroke="#f1f1f1" stroke-width="1.1"/></svg>
<svg style="left:1253px;top:345px" width="16" height="16" viewBox="0 0 16 16"><path d="M6.5 2.5 H13.5 M7.5 2.5 V11 M12.5 2.5 V6" fill="none" stroke="#c8c8c8" stroke-width="1.3"/><circle cx="5" cy="11.5" r="2.3" fill="none" stroke="#c8c8c8" stroke-width="1.2"/><path d="M12.5 9 V13.5 H9" fill="none" stroke="#c8c8c8" stroke-width="1.2"/></svg>
<div class="t" style="left:1274px;top:345px">appsettings.json</div>
<svg style="left:1233px;top:366px" width="7" height="10" viewBox="0 0 7 10"><path d="M1.6 1.4 L5 5 L1.6 8.6 Z" fill="none" stroke="#f1f1f1" stroke-width="1.1"/></svg>
<svg style="left:1253px;top:363px" width="16" height="16" viewBox="0 0 16 16"><text x="2.6" y="11.4" font-family="Liberation Sans,sans-serif" font-size="9.6" font-weight="bold" fill="#74c774" stroke="#74c774" stroke-width="0.4" letter-spacing="-0.3">C<tspan fill="#e6e6e6" stroke="#e6e6e6" stroke-width="0.35" font-size="8.6" dy="-0.4">#</tspan></text></svg>
<div class="t" style="letter-spacing:-0.062px;left:1274px;top:363px">Program.cs</div>
<svg style="left:1233px;top:384px" width="7" height="10" viewBox="0 0 7 10"><path d="M1.6 1.4 L5 5 L1.6 8.6 Z" fill="none" stroke="#f1f1f1" stroke-width="1.1"/></svg>
<svg style="left:1253px;top:381px" width="16" height="16" viewBox="0 0 16 16"><text x="2.6" y="11.4" font-family="Liberation Sans,sans-serif" font-size="9.6" font-weight="bold" fill="#74c774" stroke="#74c774" stroke-width="0.4" letter-spacing="-0.3">C<tspan fill="#e6e6e6" stroke="#e6e6e6" stroke-width="0.35" font-size="8.6" dy="-0.4">#</tspan></text></svg>
<div class="t" style="letter-spacing:-0.115px;left:1274px;top:381px">Startup.cs</div>
<div class="a" style="left:1269px;top:820px;width:101px;height:21px;background:#252526;border:1px solid #3f3f46;border-top:0"></div>
<div class="t" style="letter-spacing:-0.1px;left:1210px;top:822px">Properties</div>
<div class="t" style="letter-spacing:-0.024px;left:1275px;top:822px;color:#0097fb">Solution Explorer</div>
<div class="t" style="letter-spacing:-0.265px;left:1377px;top:822px">Team Explorer</div>
<!-- ===== Status bar ===== -->
<div class="a" style="left:0;top:846px;width:1600px;height:24px;background:#007acc"></div>
<svg style="left:4px;top:853px" width="16" height="12" viewBox="0 0 16 12"><path d="M3 0.8 H15 L13 11.2 H1 Z" fill="none" stroke="#fff" stroke-width="1.3"/></svg>
<div class="t" style="letter-spacing:-0.672px;left:28px;top:851px;color:#fff">Ready</div>
<svg style="left:1389px;top:853px" width="11" height="12" viewBox="0 0 11 12"><path d="M5.5 11.5 V1.5 M1.5 5.5 L5.5 1.5 L9.5 5.5" fill="none" stroke="#fff" stroke-width="1.7"/></svg>
<div class="t" style="left:1409px;top:851px;color:#fff">Add to Source Control</div>
<div class="a" style="left:1533px;top:856px;width:0;height:0;border-left:4px solid transparent;border-right:4px solid transparent;border-bottom:4px solid #fff"></div>
<svg style="left:1560px;top:850px" width="22" height="19" viewBox="0 0 22 19"><path d="M9 1 C5.5 1 5 4 5 7.5 C5 9.5 4 11 3 12 H15 C14 11 13 9.5 13 7.5 C13 4 12.500 1 9 1 Z M7.5 13 C7.5 15 10.5 15 10.5 13" fill="#9cc3e6"/><circle cx="16" cy="12.500" r="5.500" fill="#e51400"/><text x="13.200" y="16.300" font-family="Liberation Sans,sans-serif" font-size="10" fill="#fff">3</text></svg>
<!-- ===== Context menu ===== -->
<div class="a" id="ctx" style="left:389px;top:340px;width:348px;height:522px;background:#1b1b1c;border:1px solid #333337;box-shadow:3px 3px 5px rgba(0,0,0,0.55)">
<div class="a" style="left:2px;top:1px;width:342px;height:23px;background:#333334"></div>
<div class="mi" style="letter-spacing:-0.043px;left:34px;top:6px;color:#f1f1f1">Add View...</div>
<svg style="left:10px;top:6px" width="11" height="13" viewBox="0 0 11 13"><path d="M0.6 0.6 H7.2 L10.4 3.8 V12.4 H0.6 Z" fill="none" stroke="#f1f1f1" stroke-width="1.2"/><path d="M7.2 0.6 V3.8 H10.4" fill="none" stroke="#f1f1f1" stroke-width="0.9"/><path d="M7.6 7.6 A2.1 2.1 0 1 0 5.6 9.9" fill="none" stroke="#f1f1f1" stroke-width="1"/><circle cx="5.6" cy="7.7" r="0.7" fill="#f1f1f1"/></svg>
<div class="ms" style="left:30px;top:26px;width:313px"></div>
<div class="mi" style="letter-spacing:-0.249px;left:34px;top:33px;color:#f1f1f1">Go To View</div>
<div class="mk" style="letter-spacing:0.189px;left:247px;top:33px;color:#f1f1f1">Ctrl+M, Ctrl+G</div>
<svg style="left:10px;top:33px" width="11" height="13" viewBox="0 0 11 13"><path d="M0.6 0.6 H7.2 L10.4 3.8 V12.4 H0.6 Z" fill="none" stroke="#f1f1f1" stroke-width="1.2"/><path d="M7.2 0.6 V3.8 H10.4" fill="none" stroke="#f1f1f1" stroke-width="0.9"/><path d="M7.6 7.6 A2.1 2.1 0 1 0 5.6 9.9" fill="none" stroke="#f1f1f1" stroke-width="1"/><circle cx="5.6" cy="7.7" r="0.7" fill="#f1f1f1"/></svg>
<div class="ms" style="left:30px;top:53px;width:313px"></div>
<div class="mi" style="letter-spacing:-0.03px;left:34px;top:60px;color:#f1f1f1">Quick Actions and Refactorings...</div>
<div class="mk" style="letter-spacing:0.417px;left:247px;top:60px;color:#f1f1f1">Ctrl+.</div>
<svg style="left:8px;top:60px" width="12" height="16" viewBox="0 0 12 16"><path d="M6 0.5 C2.5 0.5 0.5 3 0.5 5.5 C0.5 7.5 2 8.8 3 10.5 V11.5 H9 V10.5 C10 8.8 11.5 7.5 11.5 5.5 C11.5 3 9.5 0.5 6 0.5 Z" fill="#ffd83b"/><path d="M3.5 12.5 H8.5 M3.5 14 H8.5 M4.5 15.4 H7.5" stroke="#e0e0e0" stroke-width="1"/><path d="M5 5 L6 9.5 L7 5" fill="none" stroke="#fff3b0" stroke-width="0.8"/></svg>
<div class="mi" style="letter-spacing:-0.357px;left:34px;top:82px;color:#f1f1f1">Rename...</div>
<div class="mk" style="letter-spacing:-1.216px;left:247px;top:82px;color:#f1f1f1">F2</div>
<svg style="left:7px;top:84px" width="14" height="10" viewBox="0 0 14 10"><rect x="0.5" y="0.5" width="13" height="9" fill="none" stroke="#f1f1f1" stroke-width="1"/><path d="M2.4 2.5 H4.6 M2.4 7.5 H4.6 M3.5 2.5 V7.5" stroke="#f1f1f1" stroke-width="0.9"/></svg>
<div class="mi" style="letter-spacing:-0.229px;left:34px;top:104px;color:#f1f1f1">Remove and Sort Usings</div>
<div class="mk" style="letter-spacing:-0.04px;left:247px;top:104px;color:#f1f1f1">Ctrl+R, Ctrl+G</div>
<div class="ms" style="left:30px;top:124px;width:313px"></div>
<div class="mi" style="letter-spacing:-0.016px;left:34px;top:131px;color:#f1f1f1">Peek Definition</div>
<div class="mk" style="letter-spacing:0.033px;left:247px;top:131px;color:#f1f1f1">Alt+F12</div>
<svg style="left:9px;top:130px" width="12" height="15" viewBox="0 0 12 15"><rect x="0" y="0.2" width="11.5" height="1" fill="#f1f1f1"/><rect x="1.5" y="2.7" width="8.5" height="1" fill="#f1f1f1"/><rect x="2.5" y="4.4" width="6.5" height="6" fill="#e8e8e8"/><rect x="1.5" y="11.2" width="8.5" height="1" fill="#f1f1f1"/><rect x="0" y="13.5" width="11.5" height="1" fill="#f1f1f1"/></svg>
<div class="mi" style="left:34px;top:153px;color:#f1f1f1">Go To Definition</div>
<div class="mk" style="letter-spacing:-0.994px;left:247px;top:153px;color:#f1f1f1">F12</div>
<svg style="left:8px;top:153px" width="13" height="14" viewBox="0 0 13 14"><rect x="4" y="7.3" width="7.5" height="6.5" fill="#d8d8d8"/><path d="M0.3 3 H6 M3.6 0.6 L6.2 3 L3.6 5.4" fill="none" stroke="#75beff" stroke-width="1.5"/><path d="M6.8 3.4 V5.8" stroke="#75beff" stroke-width="1.2"/></svg>
<div class="mi" style="letter-spacing:-0.52px;left:34px;top:175px;color:#f1f1f1">Go To Base</div>
<div class="mk" style="letter-spacing:0.553px;left:247px;top:175px;color:#f1f1f1">Alt+Home</div>
<div class="mi" style="letter-spacing:0.059px;left:34px;top:197px;color:#f1f1f1">Go To Implementation</div>
<div class="mk" style="letter-spacing:-0.094px;left:247px;top:197px;color:#f1f1f1">Ctrl+F12</div>
<div class="mi" style="letter-spacing:-0.192px;left:34px;top:219px;color:#f1f1f1">Find All References</div>
<div class="mk" style="letter-spacing:-0.102px;left:247px;top:219px;color:#f1f1f1">Ctrl+K, R</div>
<div class="mi" style="letter-spacing:-0.127px;left:34px;top:241px;color:#f1f1f1">View Call Hierarchy</div>
<div class="mk" style="letter-spacing:0.089px;left:247px;top:241px;color:#f1f1f1">Ctrl+K, Ctrl+T</div>
<svg style="left:8px;top:241px" width="12" height="14" viewBox="0 0 12 14"><path d="M1.2 4.6 V2.6 Q1.2 0.8 3 0.8 H8.5 Q10.3 0.8 10.3 2.6 V4.6" fill="none" stroke="#f1f1f1" stroke-width="1.4"/><rect x="4.8" y="5" width="2" height="2" fill="#f1f1f1"/><rect x="2.6" y="8.2" width="2" height="2" fill="#f1f1f1"/><rect x="7" y="8.2" width="2" height="2" fill="#f1f1f1"/><rect x="0.2" y="11.6" width="2" height="2" fill="#f1f1f1"/><rect x="4.8" y="11.6" width="2" height="2" fill="#f1f1f1"/><rect x="9.4" y="11.6" width="2" height="2" fill="#f1f1f1"/></svg>
<div class="ms" style="left:30px;top:261px;width:313px"></div>
<div class="mi" style="letter-spacing:-0.246px;left:34px;top:268px;color:#f1f1f1">Create Unit Tests</div>
<div class="ms" style="left:30px;top:288px;width:313px"></div>
<div class="mi" style="letter-spacing:0.047px;left:34px;top:295px;color:#f1f1f1">Breakpoint</div>
<div class="sub" style="left:331px;top:298px"></div>
<div class="ms" style="left:30px;top:315px;width:313px"></div>
<div class="mi" style="letter-spacing:-0.188px;left:34px;top:322px;color:#f1f1f1">Run To Cursor</div>
<div class="mk" style="letter-spacing:-0.094px;left:247px;top:322px;color:#f1f1f1">Ctrl+F10</div>
<svg style="left:11px;top:322px" width="9" height="13" viewBox="0 0 9 13"><path d="M0.5 0.8 V10.2 L2.9 8 L4.7 12 L6.3 11.3 L4.5 7.4 H7.8 Z" fill="#d0d0d0"/></svg>
<div class="ms" style="left:30px;top:342px;width:313px"></div>
<div class="mi" style="letter-spacing:-0.078px;left:34px;top:349px;color:#f1f1f1">Execute in Interactive</div>
<div class="mk" style="letter-spacing:-0.078px;left:247px;top:349px;color:#f1f1f1">Ctrl+E, Ctrl+E</div>
<div class="ms" style="left:30px;top:369px;width:313px"></div>
<div class="mi" style="left:34px;top:376px;color:#f1f1f1">Snippet</div>
<div class="sub" style="left:331px;top:379px"></div>
<div class="ms" style="left:30px;top:396px;width:313px"></div>
<div class="mi" style="letter-spacing:0.606px;left:34px;top:403px;color:#f1f1f1">Cut</div>
<div class="mk" style="letter-spacing:0.283px;left:247px;top:403px;color:#f1f1f1">Ctrl+X</div>
<svg style="left:8px;top:404px" width="13" height="14" viewBox="0 0 13 14"><path d="M3 0.5 L8.8 9.5 M10 0.5 L4.2 9.5" stroke="#f1f1f1" stroke-width="1.2" fill="none"/><circle cx="3" cy="11" r="2.2" fill="none" stroke="#f1f1f1" stroke-width="1.2"/><circle cx="10" cy="11" r="2.2" fill="none" stroke="#f1f1f1" stroke-width="1.2"/></svg>
<div class="mi" style="letter-spacing:0.295px;left:34px;top:425px;color:#f1f1f1">Copy</div>
<div class="mk" style="letter-spacing:0.271px;left:247px;top:425px;color:#f1f1f1">Ctrl+C</div>
<svg style="left:8px;top:426px" width="13" height="14" viewBox="0 0 13 14"><path d="M4.5 4 V0.6 H11.4 V9.4 H8" fill="none" stroke="#f1f1f1" stroke-width="1.2"/><rect x="0.6" y="4.6" width="6.8" height="8.8" fill="none" stroke="#f1f1f1" stroke-width="1.2"/></svg>
<div class="mi" style="letter-spacing:-0.447px;left:34px;top:447px;color:#656565">Paste</div>
<div class="mk" style="letter-spacing:0.163px;left:247px;top:447px;color:#656565">Ctrl+V</div>
<svg style="left:8px;top:448px" width="13" height="14" viewBox="0 0 13 14"><path d="M3.5 2.5 H0.6 V13.4 H5 M8.5 2.5 H11.4 V6" fill="none" stroke="#4a4a4e" stroke-width="1.2"/><path d="M3.5 3.5 V1 H8.5 V3.5 Z" fill="none" stroke="#4a4a4e" stroke-width="1"/><rect x="5.2" y="6.6" width="6.2" height="6.8" fill="none" stroke="#4a4a4e" stroke-width="1.2"/></svg>
<div class="ms" style="left:30px;top:467px;width:313px"></div>
<div class="mi" style="letter-spacing:0.323px;left:34px;top:474px;color:#f1f1f1">Annotation</div>
<div class="sub" style="left:331px;top:477px"></div>
<div class="ms" style="left:30px;top:494px;width:313px"></div>
<div class="mi" style="letter-spacing:0.328px;left:34px;top:501px;color:#f1f1f1">Outlining</div>
<div class="sub" style="left:331px;top:504px"></div>
</div>
<svg style="left:459px;top:363px" width="13" height="21" viewBox="0 0 13 21"><path d="M1 1 V16.5 L4.6 13.2 L7.4 19.8 L10 18.7 L7.2 12.3 H12 Z" fill="#fff" stroke="#000" stroke-width="1"/></svg>
</div><!--root-->
</body>
</html>
